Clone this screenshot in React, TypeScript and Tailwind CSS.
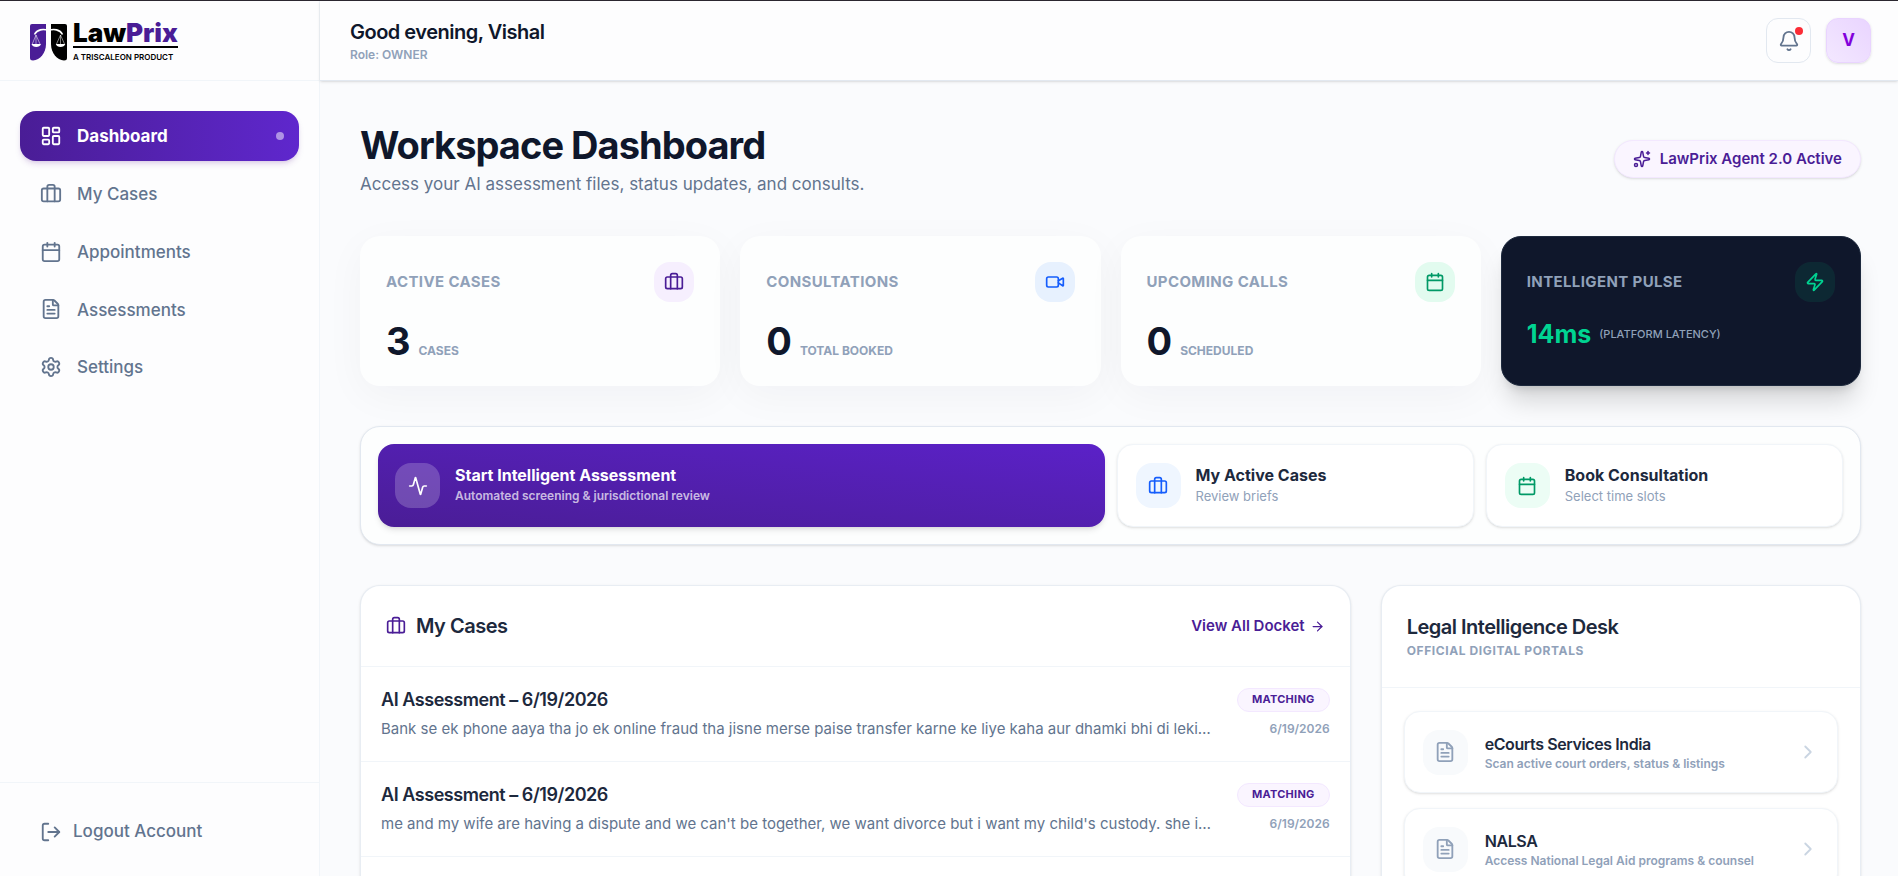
import type { ReactNode } from "react";
import {
  Activity,
  ArrowRight,
  Bell,
  Briefcase,
  Calendar,
  ChevronRight,
  FileText,
  LayoutDashboard,
  LogOut,
  Settings,
  Sparkles,
  Video,
  Zap,
} from "lucide-react";

const navItems = [
  { label: "Dashboard", icon: LayoutDashboard, active: true },
  { label: "My Cases", icon: Briefcase, active: false },
  { label: "Appointments", icon: Calendar, active: false },
  { label: "Assessments", icon: FileText, active: false },
  { label: "Settings", icon: Settings, active: false },
];

const stats = [
  {
    label: "Active Cases",
    value: "3",
    unit: "Cases",
    icon: Briefcase,
    tone: "bg-[#f6effe] text-[#4a1d96]",
  },
  {
    label: "Consultations",
    value: "0",
    unit: "Total Booked",
    icon: Video,
    tone: "bg-[#e7f1fe] text-blue-600",
  },
  {
    label: "Upcoming Calls",
    value: "0",
    unit: "Scheduled",
    icon: Calendar,
    tone: "bg-[#e2fbef] text-emerald-600",
  },
];

const cases = [
  {
    title: "AI Assessment – 6/19/2026",
    text: "Bank se ek phone aaya tha jo ek online fraud tha jisne merse paise transfer karne ke liye kaha aur dhamki bhi di lekin maine",
    date: "6/19/2026",
  },
  {
    title: "AI Assessment – 6/19/2026",
    text: "me and my wife are having a dispute and we can't be together, we want divorce but i want my child's custody. she is not",
    date: "6/19/2026",
  },
  {
    title: "AI Assessment – 6/19/2026",
    text: "me and my wife are having a dispute and we can't be together",
    date: "6/19/2026",
  },
];

const portals = [
  {
    title: "eCourts Services India",
    text: "Scan active court orders, status & listings",
  },
  { title: "NALSA", text: "Access National Legal Aid programs & counsel" },
];

function Logo() {
  return (
    <a href="#" className="flex items-center gap-[6px]">
      <svg width="37" height="37" viewBox="0 0 37 37" fill="none">
        <path d="M2 0h14v20c0 9-6 16-13 16.500Q0 36.500 0 34V2Q0 0 2 0Z" fill="#4a1d96" />
        <path d="M35 0H21v20c0 9 6 16 13 16.500Q37 36.500 37 34V2Q37 0 35 0Z" fill="#000" />
        <path
          d="M4.500 10.500C7 5.500 13 4.500 18.500 6.500C24 4.500 30 5.500 32.500 10.500"
          stroke="#fff"
          strokeWidth="1.600"
        />
        <circle cx="18.500" cy="3" r="2" fill="#fff" />
        <path d="M17 5h3v31h-3z" fill="#fff" />
        <path
          d="M6 11 2.300 20M6 11l4 9M6 11v9M30.500 11l-4 9M30.500 11l4 9M30.500 11v9"
          stroke="#fff"
          strokeWidth="0.500"
        />
        <path
          d="M1.500 20h9.500c-1 4-8.500 4-9.500 0ZM25.800 20h9.500c-1 4-8.500 4-9.500 0Z"
          fill="#fff"
        />
      </svg>
      <span className="flex flex-col">
        <span className="text-[26px] leading-[20px] font-black text-black">
          Law<span className="text-[#4a1d96]">Prix</span>
        </span>
        <span className="mt-[3px] border-t-2 border-black pt-1 text-[8px] leading-[10px] font-semibold whitespace-nowrap text-black">
          A TRISCALEON PRODUCT
        </span>
      </span>
    </a>
  );
}

function Sidebar() {
  return (
    <aside className="flex w-80 shrink-0 flex-col border-r border-slate-100 bg-[#fdfdfe]">
      <div className="flex h-20 items-center border-b border-slate-100 pt-1 pl-[30px]">
        <Logo />
      </div>
      <nav className="flex h-[341px] flex-col justify-between px-5 py-[30px]">
        {navItems.map(({ label, icon: Icon, active }) => (
          <a
            key={label}
            href="#"
            className={`flex h-[50px] items-center gap-[15px] rounded-2xl px-5 text-[17px] ${
              active
                ? "bg-linear-to-r from-[#4a1d96] to-[#5f27cd] font-bold text-white shadow-md shadow-purple-900/15"
                : "font-medium text-slate-500"
            }`}
          >
            <Icon size={22} />
            <span className="pt-[2px]">{label}</span>
            {active && (
              <span className="mr-[-5px] ml-auto size-2 rounded-full bg-white/50" />
            )}
          </a>
        ))}
      </nav>
      <div className="mt-auto border-t border-slate-100 px-5 pt-[26px] pb-[22px]">
        <button className="flex h-[45px] items-center gap-[11px] px-5 text-[17px] font-medium text-slate-500">
          <LogOut size={22} />
          Logout Account
        </button>
      </div>
    </aside>
  );
}

function Header() {
  return (
    <header className="z-10 flex h-20 shrink-0 items-center justify-between border-b border-slate-200 bg-[#fdfdfe] pr-[27px] pl-[30px] shadow-sm">
      <div>
        <h2 className="text-xl leading-7 font-semibold tracking-tight text-slate-900">
          Good evening, Vishal
        </h2>
        <p className="text-xs leading-[18px] font-semibold text-slate-400">
          Role: OWNER
        </p>
      </div>
      <div className="flex gap-[15px]">
        <button
          aria-label="Notifications"
          className="relative flex size-[45px] items-center justify-center rounded-xl border border-slate-200 text-slate-500"
        >
          <Bell size={22} />
          <span className="absolute top-2 right-[7px] size-2 rounded-full bg-[#fb2c36]" />
        </button>
        <button className="size-[45px] rounded-xl border border-purple-200 bg-linear-to-tr from-purple-100 to-purple-200 text-[17px] font-bold text-purple-700 shadow-sm">
          V
        </button>
      </div>
    </header>
  );
}

function StatCards() {
  return (
    <section className="grid grid-cols-4 gap-5">
      {stats.map(({ label, value, unit, icon: Icon, tone }) => (
        <div
          key={label}
          className="h-[150px] rounded-[20px] bg-[#fdfefe] p-[26px] shadow-[0_10px_40px_rgba(15,23,42,0.04)]"
        >
          <div className="flex items-center justify-between">
            <h3 className="text-[15px] font-bold tracking-wide text-slate-400 uppercase">
              {label}
            </h3>
            <span
              className={`flex size-10 items-center justify-center rounded-2xl ${tone}`}
            >
              <Icon size={20} />
            </span>
          </div>
          <div className="mt-[14px] flex items-baseline gap-2">
            <span className="text-[38px] leading-[50px] font-bold text-slate-900">
              {value}
            </span>
            <span className="text-xs font-bold text-slate-400 uppercase">
              {unit}
            </span>
          </div>
        </div>
      ))}
      <div className="h-[150px] rounded-[20px] border border-slate-800 bg-slate-900 p-[25px] shadow-xl shadow-black/15">
        <div className="flex items-center justify-between">
          <h3 className="text-[15px] font-bold tracking-wide text-slate-400 uppercase">
            Intelligent Pulse
          </h3>
          <span className="flex size-10 items-center justify-center rounded-2xl bg-emerald-500/10 text-[#00d492]">
            <Zap size={20} />
          </span>
        </div>
        <div className="mt-[15px] flex items-center gap-2">
          <span className="text-[25px] leading-[34px] font-bold text-[#00d492]">
            14ms
          </span>
          <span className="text-[11px] font-medium text-slate-400">
            (PLATFORM LATENCY)
          </span>
        </div>
      </div>
    </section>
  );
}

function ActionButton({
  icon,
  tone,
  title,
  text,
}: {
  icon: ReactNode;
  tone: string;
  title: string;
  text: string;
}) {
  return (
    <button className="flex h-[83px] items-center gap-[15px] rounded-2xl border border-slate-100 bg-white px-[18px] text-left shadow-sm">
      <span
        className={`flex size-[45px] items-center justify-center rounded-2xl ${tone}`}
      >
        {icon}
      </span>
      <span className="flex flex-col pb-[2px]">
        <span className="text-base leading-[22px] font-bold text-slate-800">
          {title}
        </span>
        <span className="text-[13px] leading-5 text-slate-400">{text}</span>
      </span>
    </button>
  );
}

function QuickActions() {
  return (
    <section className="mt-10 grid grid-cols-4 gap-3 rounded-[20px] border border-slate-200 bg-[#fdfefe] p-[17px] shadow-sm">
      <button className="col-span-2 flex h-[83px] items-center gap-[15px] rounded-2xl bg-linear-to-tr from-[#4a1d96] to-[#5b21c8] px-[17px] text-left shadow-md">
        <span className="flex size-[45px] items-center justify-center rounded-2xl bg-white/20 text-white">
          <Activity size={20} />
        </span>
        <span className="flex flex-col pb-[2px]">
          <span className="text-base leading-[22px] font-bold text-white">
            Start Intelligent Assessment
          </span>
          <span className="text-xs leading-5 font-semibold text-white/70">
            Automated screening & jurisdictional review
          </span>
        </span>
      </button>
      <ActionButton
        icon={<Briefcase size={20} />}
        tone="bg-blue-50 text-blue-600"
        title="My Active Cases"
        text="Review briefs"
      />
      <ActionButton
        icon={<Calendar size={20} />}
        tone="bg-emerald-50 text-emerald-600"
        title="Book Consultation"
        text="Select time slots"
      />
    </section>
  );
}

function CaseList() {
  return (
    <section className="col-span-8 overflow-hidden rounded-[20px] border border-slate-200/80 bg-white shadow-sm">
      <div className="flex h-[81px] items-center justify-between border-b border-slate-100 px-[25px]">
        <h2 className="flex items-center gap-[10px] text-xl font-semibold tracking-tight text-slate-800">
          <Briefcase size={20} className="text-[#4a1d96]" />
          My Cases
        </h2>
        <a
          href="#"
          className="flex items-center gap-[5px] text-[15px] font-semibold text-[#4a1d96]"
        >
          View All Docket
          <ArrowRight size={15} />
        </a>
      </div>
      {cases.map((item, i) => (
        <article
          key={i}
          className="flex h-[95px] items-center justify-between gap-6 border-b border-slate-100 px-5"
        >
          <div className="min-w-0 max-w-[830px]">
            <h3 className="text-[18px] leading-6 font-semibold tracking-tight text-slate-800">
              {item.title}
            </h3>
            <p className="mt-[5px] truncate text-[15px] leading-6 text-slate-500">
              {item.text}
            </p>
          </div>
          <div className="flex shrink-0 flex-col items-end gap-[5px]">
            <span className="flex h-6 items-center rounded-xl border border-purple-100 bg-purple-50 px-[14px] text-[11px] font-bold tracking-wide text-[#4a1d96]">
              MATCHING
            </span>
            <time className="text-xs leading-6 font-semibold text-slate-400">
              {item.date}
            </time>
          </div>
        </article>
      ))}
    </section>
  );
}

function LegalDesk() {
  return (
    <section className="col-span-4 rounded-[20px] border border-slate-200/80 bg-white shadow-sm">
      <div className="flex h-[102px] flex-col justify-center border-b border-slate-100 px-[25px]">
        <h2 className="text-xl leading-7 font-semibold tracking-tight text-slate-800">
          Legal Intelligence Desk
        </h2>
        <p className="text-xs leading-5 font-bold tracking-wider text-slate-400 uppercase">
          Official Digital Portals
        </p>
      </div>
      <div className="flex flex-col gap-[15px] px-[22px] pt-[23px]">
        {portals.map((portal) => (
          <a
            key={portal.title}
            href="#"
            className="flex h-[82px] items-center gap-[17px] rounded-2xl border border-slate-100 bg-white px-[18px] shadow-sm"
          >
            <span className="flex size-[45px] items-center justify-center rounded-2xl bg-slate-50 text-slate-400">
              <FileText size={22} />
            </span>
            <span className="flex flex-col pt-[2px]">
              <span className="text-base leading-[22px] font-semibold tracking-tight text-slate-800">
                {portal.title}
              </span>
              <span className="text-xs leading-[18px] font-semibold text-slate-400">
                {portal.text}
              </span>
            </span>
            <ChevronRight size={22} className="ml-auto text-slate-300" />
          </a>
        ))}
      </div>
    </section>
  );
}

export default function App() {
  return (
    <div className="flex h-dvh overflow-hidden border-t border-[#2b2730] bg-[#fafbfd] font-['Inter',sans-serif]">
      <Sidebar />
      <div className="flex min-w-0 flex-1 flex-col">
        <Header />
        <main className="flex-1 overflow-hidden pt-10 pr-[37px] pl-10">
          <div className="flex h-[115px] items-start justify-between">
            <div>
              <h1 className="text-[38px] leading-[48px] font-bold tracking-tight text-slate-900">
                Workspace Dashboard
              </h1>
              <p className="mt-[3px] text-[17px] leading-6 text-slate-500">
                Access your AI assessment files, status updates, and consults.
              </p>
            </div>
            <span className="mt-[19px] flex h-[38px] items-center gap-[9px] rounded-full border border-purple-100 bg-purple-50 px-[18px] text-[15px] font-semibold text-[#4a1d96] shadow-sm">
              <Sparkles size={18} />
              LawPrix Agent 2.0 Active
            </span>
          </div>
          <StatCards />
          <QuickActions />
          <div className="mt-10 grid grid-cols-12 gap-[30px]">
            <CaseList />
            <LegalDesk />
          </div>
        </main>
      </div>
    </div>
  );
}
